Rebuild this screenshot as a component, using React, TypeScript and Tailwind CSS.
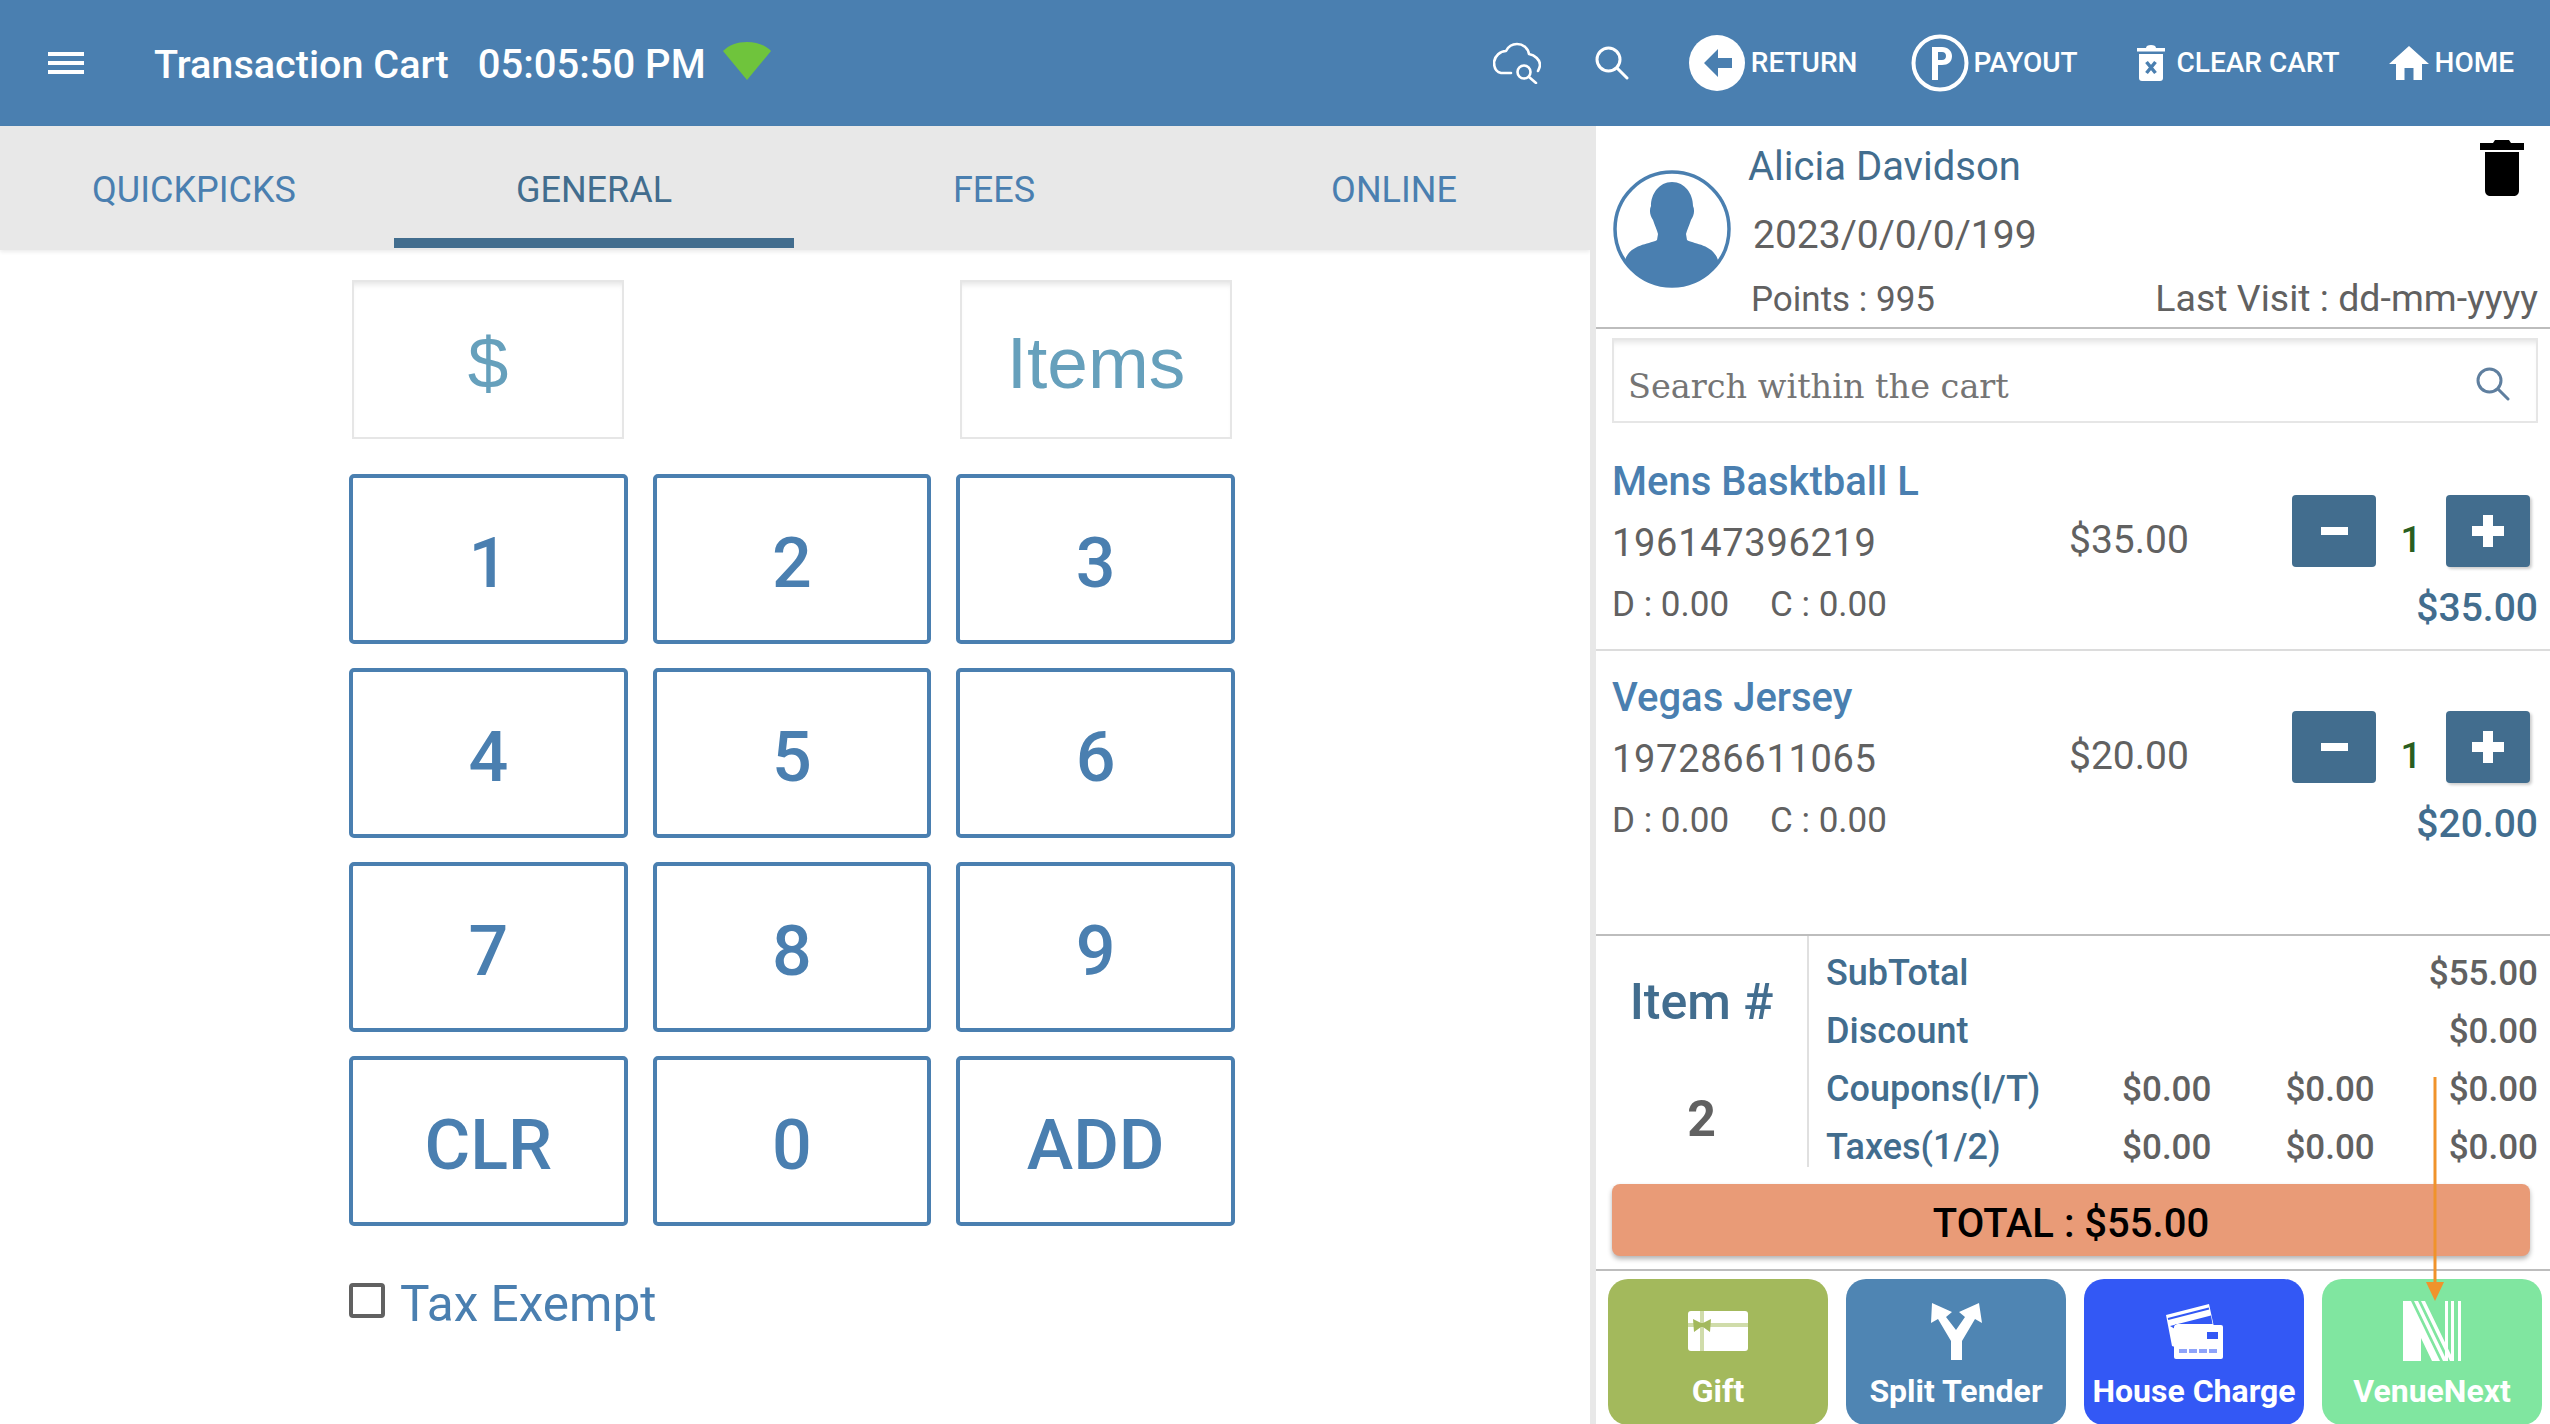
const BLUE = '#4a7fb0';

function SearchGlyph({ className, color }: { className: string; color: string }) {
  return (
    <svg viewBox="0 0 34 34" className={className} fill="none" stroke={color} strokeWidth="3" strokeLinecap="round">
      <circle cx="13.5" cy="13.5" r="11.5" />
      <path d="M22 22L32 32" />
    </svg>
  );
}

function CloudSearch() {
  return (
    <svg viewBox="0 0 48 42" className="w-[48px] h-[42px]" fill="none" stroke="white" strokeWidth="2.6" strokeLinecap="round" strokeLinejoin="round">
      <path d="M18 31H8C3 30 1 25 1 20C2 14 7 9 13 9C15 5 19 2 24 2C30 2 35 6 36 12C42 13 47 18 47 23C47 25 46 27 45 29" />
      <circle cx="31" cy="30" r="6.5" />
      <path d="M36 35L43 41" />
    </svg>
  );
}

function ReturnIcon() {
  return (
    <svg viewBox="0 0 56 56" className="w-[56px] h-[56px]">
      <circle cx="28" cy="28" r="28" fill="white" />
      <path d="M15 28L29 14V23H43V33H29V42Z" fill={BLUE} />
    </svg>
  );
}

function PayoutIcon() {
  return (
    <svg viewBox="0 0 58 58" className="w-[58px] h-[58px]">
      <circle cx="29" cy="29" r="26.5" fill="none" stroke="white" strokeWidth="4" />
      <path d="M21 46V13H31C37 13 41 17 41 22C41 28 37 31 31 31H27V46ZM27 18V26H31C33.5 26 35 24.5 35 22C35 19.5 33.5 18 31 18Z" fill="white" fillRule="evenodd" />
    </svg>
  );
}

function ClearCartIcon() {
  return (
    <svg viewBox="0 0 28 36" className="w-[28px] h-[36px]">
      <path d="M9 3C9 1 11 0 14 0C17 0 19 1 19 3H28V6.5H0V3Z" fill="white" />
      <path d="M2 9H26V33C26 35 25 36 23 36H5C3 36 2 35 2 33Z" fill="white" />
      <path d="M9.5 17L18.5 28M18.5 17L9.5 28" stroke={BLUE} strokeWidth="3.5" />
    </svg>
  );
}

function HomeIcon() {
  return (
    <svg viewBox="0 0 40 34" className="w-[40px] h-[34px]">
      <path d="M20 0L40 18H33V34H24.5V22H15.5V34H7V18H0Z" fill="white" />
    </svg>
  );
}

function Avatar() {
  return (
    <svg viewBox="0 0 118 118" className="w-[118px] h-[118px] shrink-0">
      <defs>
        <clipPath id="avatar-clip">
          <circle cx="59" cy="59" r="57.5" />
        </clipPath>
      </defs>
      <circle cx="59" cy="59" r="57" fill="white" stroke={BLUE} strokeWidth="3.5" />
      <g clipPath="url(#avatar-clip)" fill={BLUE}>
        <path d="M59 12C72 12 80 24 80 36C82 40 81 46 78 50C76 56 74 60 73 64L74 70C80 74 100 74 105 90L106 118H12V90C17 74 38 74 44 70L45 64C44 60 42 56 40 50C37 46 36 40 38 36C38 24 46 12 59 12Z" />
      </g>
    </svg>
  );
}

function GiftIcon() {
  return (
    <svg viewBox="0 0 60 40" className="w-[60px] h-[40px]">
      <rect width="60" height="40" rx="3" fill="white" />
      <rect y="12" width="60" height="4" fill="#d0dcaa" />
      <rect x="12" width="4" height="40" fill="#d0dcaa" />
      <path d="M5 8L13 12L15 12L23 8L22 21L15 16L13 16L6 21Z" fill="#a3b95c" />
    </svg>
  );
}

function SplitIcon() {
  return (
    <svg viewBox="0 0 52 57" className="w-[52px] h-[57px]">
      <path d="M2 0L22 9L16 14L26 27L35 14L29 9L49 0L52 20L45 16L32 38V57H21V38L8 16L1 20Z" fill="white" />
    </svg>
  );
}

function HouseChargeIcon() {
  return (
    <svg viewBox="0 0 58 56" className="w-[58px] h-[56px]">
      <path d="M1 12L44 1L49 24H10V44L7 43Z" fill="white" />
      <path d="M3 16L44 5.5" stroke="#3358f5" strokeWidth="2" />
      <path d="M5 23L46 12.5L47.5 21H10V26Z" fill="#3358f5" />
      <rect x="9" y="22" width="49" height="34" rx="2" fill="white" />
      <rect x="42" y="29" width="11" height="7" fill="#3358f5" />
      <path d="M14 48H53" stroke="#8ea3fa" strokeWidth="4" strokeDasharray="8 2" />
    </svg>
  );
}

function VenueNextIcon() {
  return (
    <svg viewBox="0 0 58 60" className="w-[58px] h-[60px]">
      <path d="M0 0H8L37 60H29L18 37V60H0Z" fill="white" />
      <path d="M11 0H15L44 60H40ZM18 0H22L51 60H47Z" fill="white" />
      <path d="M42 0H45V60H42ZM48 0H51V60H48ZM55 0H58V60H55Z" fill="white" />
    </svg>
  );
}

function HeaderAction({ icon, label, className }: { icon: React.ReactNode; label: string; className?: string }) {
  return (
    <div className={`flex items-center ${className ?? ''}`}>
      {icon}
      <span className="text-[28px] font-medium leading-none">{label}</span>
    </div>
  );
}

function Header() {
  return (
    <header className="h-[126px] bg-[#4a7fb0] text-white flex items-center shrink-0 pr-[36px]">
      <div className="ml-[48px] w-[36px] flex flex-col gap-[5px]">
        <div className="h-[4px] bg-white" />
        <div className="h-[4px] bg-white" />
        <div className="h-[4px] bg-white" />
      </div>
      <div className="ml-[70px] mt-[4px] text-[39.6px] font-medium leading-none">Transaction Cart</div>
      <div className="ml-[29px] mt-[4px] text-[40px] font-medium leading-none">05:05:50 PM</div>
      <svg viewBox="0 0 48 38" className="ml-[17px] mb-[4px] w-[48px] h-[38px]">
        <path d="M0 9C6 3 14 0 24 0C34 0 42 3 48 9L24 38Z" fill="#6fc43c" />
      </svg>
      <div className="ml-auto flex items-center">
        <CloudSearch />
        <SearchGlyph className="ml-[54px] w-[34px] h-[34px]" color="white" />
        <HeaderAction className="ml-[60px] gap-[6px]" icon={<ReturnIcon />} label="RETURN" />
        <HeaderAction className="ml-[54px] gap-[4px]" icon={<PayoutIcon />} label="PAYOUT" />
        <HeaderAction className="ml-[59px] gap-[12px]" icon={<ClearCartIcon />} label="CLEAR CART" />
        <HeaderAction className="ml-[49px] gap-[6px]" icon={<HomeIcon />} label="HOME" />
      </div>
    </header>
  );
}

function Tabs() {
  const tabs = ['QUICKPICKS', 'GENERAL', 'FEES', 'ONLINE'];
  return (
    <div className="h-[124px] bg-[#e8e8e8] shadow-[0_2px_4px_rgba(0,0,0,0.08)] overflow-hidden shrink-0">
      <div className="h-full -ml-[6px] grid grid-cols-[repeat(4,400px)]">
        {tabs.map((t) => (
          <div key={t} className="flex flex-col items-center">
            <div className={`flex-1 flex items-center text-[36px] pt-[16px] ${t === 'GENERAL' ? 'text-[#426d8e]' : 'text-[#4a7fb0]'}`}>
              {t}
            </div>
            <div className={`h-[10px] w-full mb-[2px] ${t === 'GENERAL' ? 'bg-[#426d8e]' : ''}`} />
          </div>
        ))}
      </div>
    </div>
  );
}

function Display({ text }: { text: string }) {
  return (
    <div className="w-[272px] h-[159px] pt-[6px] border-2 border-[#e6e6e6] shadow-[inset_0_6px_6px_-4px_rgba(0,0,0,0.12)] flex items-center justify-center text-[73px] text-[#66a0bc] font-['Liberation_Sans',sans-serif]">
      {text}
    </div>
  );
}

function Keypad() {
  const keys = ['1', '2', '3', '4', '5', '6', '7', '8', '9', 'CLR', '0', 'ADD'];
  return (
    <div className="ml-[349px] w-[886px] pt-[30px]">
      <div className="flex justify-between px-[3px]">
        <Display text="$" />
        <Display text="Items" />
      </div>
      <div className="mt-[35px] grid grid-cols-3 gap-x-[25px] gap-y-[24px]">
        {keys.map((k) => (
          <div key={k} className="h-[170px] pt-[8px] border-[4px] border-[#4a7fb0] rounded-[5px] flex items-center justify-center text-[70px] font-medium text-[#4a7fb0]">
            {k}
          </div>
        ))}
      </div>
      <div className="mt-[54px] flex items-center">
        <div className="w-[36px] h-[35px] mb-[8px] border-[4px] border-[#616161] rounded-[4px]" />
        <span className="ml-[15px] text-[49.5px] leading-none text-[#4a7fb0]">Tax Exempt</span>
      </div>
    </div>
  );
}

function CartItem({ name, upc, price, divider }: { name: string; upc: string; price: string; divider?: boolean }) {
  return (
    <div className={`h-[216px] pl-[16px] pr-[12px] flex ${divider ? 'border-b-2 border-[#dcdcdc]' : ''}`}>
      <div className="w-[457px] pt-[17px]">
        <div className="text-[40px] font-medium leading-[60px] text-[#4a7fb0]">{name}</div>
        <div className="text-[38px] leading-[62px] tracking-[0.7px] text-[#616161]">{upc}</div>
        <div className="text-[35px] leading-[62px] text-[#616161] flex gap-[41px]">
          <span>D : 0.00</span>
          <span>C : 0.00</span>
        </div>
      </div>
      <div className="w-[222px] pt-[86px] text-[39px] leading-none text-[#616161]">{price}</div>
      <div className="flex-1 pt-[60px] flex flex-col items-end">
        <div className="flex items-center mr-[8px]">
          <div className="w-[84px] h-[72px] bg-[#426d8e] rounded-[4px] flex items-center justify-center">
            <div className="w-[27px] h-[8px] bg-white" />
          </div>
          <div className="w-[70px] text-center text-[37px] font-medium text-[#2a5e1f] leading-none pt-[16px]">1</div>
          <div className="relative w-[84px] h-[72px] bg-[#426d8e] rounded-[4px] shadow-[2px_2px_3px_rgba(0,0,0,0.2)] flex items-center justify-center">
            <div className="w-[32px] h-[10px] bg-white" />
            <div className="absolute w-[10px] h-[32px] bg-white" />
          </div>
        </div>
        <div className="mt-[22px] text-[39px] font-medium leading-none text-[#426d8e]">{price}</div>
      </div>
    </div>
  );
}

function SummaryRow({ label, values }: { label: string; values: string[] }) {
  return (
    <div className="h-[58px] flex items-center leading-none">
      <span className="flex-1 text-[36px] font-medium text-[#426d8e]">{label}</span>
      {values.map((v, i) => (
        <span key={i} className={`text-[35px] font-medium text-[#616161] ${i > 0 ? 'ml-[74px]' : ''}`}>
          {v}
        </span>
      ))}
    </div>
  );
}

function Tender({ color, label, icon }: { color: string; label: string; icon: React.ReactNode }) {
  return (
    <div className={`w-[220px] h-[146px] pt-[22px] rounded-[20px] flex flex-col items-center text-white ${color}`}>
      <div className="h-[60px] flex items-center">{icon}</div>
      <div className="text-[32px] font-bold leading-none mt-[14px] whitespace-nowrap">{label}</div>
    </div>
  );
}

function Cart() {
  return (
    <div className="flex-1 relative flex flex-col min-w-0 h-full">
      <div className="h-[203px] relative border-b-2 border-[#bdbdbd] flex shrink-0">
        <div className="pl-[17px] pt-[44px]">
          <Avatar />
        </div>
        <div className="ml-[17px] flex-1 pr-[12px] pt-[16px]">
          <div className="text-[40px] leading-[50px] text-[#426d8e]">Alicia Davidson</div>
          <div className="text-[39px] leading-[50px] mt-[18px] ml-[5px] text-[#616161]">2023/0/0/0/199</div>
          <div className="leading-[44px] mt-[16px] text-[#616161] flex justify-between items-baseline pl-[3px]">
            <span className="text-[35px]">Points : 995</span>
            <span className="text-[37.5px]">Last Visit : dd-mm-yyyy</span>
          </div>
        </div>
        <svg viewBox="0 0 44 56" className="absolute right-[26px] top-[14px] w-[44px] h-[56px]">
          <path d="M15 0H29L31 3H44V10H0V3H13Z" fill="black" />
          <path d="M5 12H39V50C39 54 37 56 33 56H11C7 56 5 54 5 50Z" fill="black" />
        </svg>
      </div>
      <div className="mt-[9px] ml-[16px] mr-[12px] h-[85px] border-2 border-[#e6e6e6] shadow-[inset_0_6px_6px_-4px_rgba(0,0,0,0.12)] flex items-center justify-between pl-[14px] pr-[26px] shrink-0">
        <span className="pt-[14px] text-[33.5px] text-[#757575] font-['DejaVu_Serif',serif]">Search within the cart</span>
        <SearchGlyph className="w-[34px] h-[34px] mt-[6px]" color="#5f7f9f" />
      </div>
      <div className="h-[511px] pt-[12px] shrink-0">
        <CartItem name="Mens Basktball L" upc="196147396219" price="$35.00" divider />
        <CartItem name="Vegas Jersey" upc="197286611065" price="$20.00" />
      </div>
      <div className="border-t-2 border-[#bdbdbd] flex h-[233px] shrink-0">
        <div className="w-[213px] border-r-2 border-[#e0e0e0] flex flex-col items-center shrink-0">
          <div className="mt-[41px] text-[50px] leading-none font-medium text-[#426d8e]">Item #</div>
          <div className="mt-[67px] text-[50px] leading-none font-bold text-[#616161]">2</div>
        </div>
        <div className="flex-1 pl-[17px] pr-[12px] pt-[8px]">
          <SummaryRow label="SubTotal" values={['$55.00']} />
          <SummaryRow label="Discount" values={['$0.00']} />
          <SummaryRow label="Coupons(I/T)" values={['$0.00', '$0.00', '$0.00']} />
          <SummaryRow label="Taxes(1/2)" values={['$0.00', '$0.00', '$0.00']} />
        </div>
      </div>
      <div className="mt-[17px] ml-[16px] mr-[20px] h-[72px] pt-[7px] rounded-[8px] bg-[#e99b77] shadow-[0_3px_5px_rgba(0,0,0,0.3)] flex items-center justify-center text-[40px] font-medium text-black shrink-0">
        TOTAL : $55.00
      </div>
      <div className="mt-[13px] border-t-2 border-[#bdbdbd] pt-[8px] pl-[12px] pr-[8px] flex justify-between">
        <Tender color="bg-[#a3b95c]" label="Gift" icon={<GiftIcon />} />
        <Tender color="bg-[#4f85b3]" label="Split Tender" icon={<SplitIcon />} />
        <Tender color="bg-[#3358f5]" label="House Charge" icon={<HouseChargeIcon />} />
        <Tender color="bg-[#80e6a0]" label="VenueNext" icon={<VenueNextIcon />} />
      </div>
      {/* annotation arrow */}
      <svg viewBox="0 0 20 224" className="absolute left-[829px] top-[951px] w-[20px] h-[224px]">
        <path d="M10 0V206" stroke="#f0932b" strokeWidth="3" />
        <path d="M1 205H19L10 224Z" fill="#f0932b" />
      </svg>
    </div>
  );
}

export default function App() {
  return (
    <div className="w-[2550px] h-[1424px] overflow-hidden bg-white flex flex-col font-['Roboto',sans-serif]">
      <Header />
      <div className="flex-1 flex min-h-0">
        <div className="w-[1590px] shrink-0">
          <Tabs />
          <Keypad />
        </div>
        <div className="w-[6px] bg-[#e8e8e8] shrink-0" />
        <Cart />
      </div>
    </div>
  );
}
